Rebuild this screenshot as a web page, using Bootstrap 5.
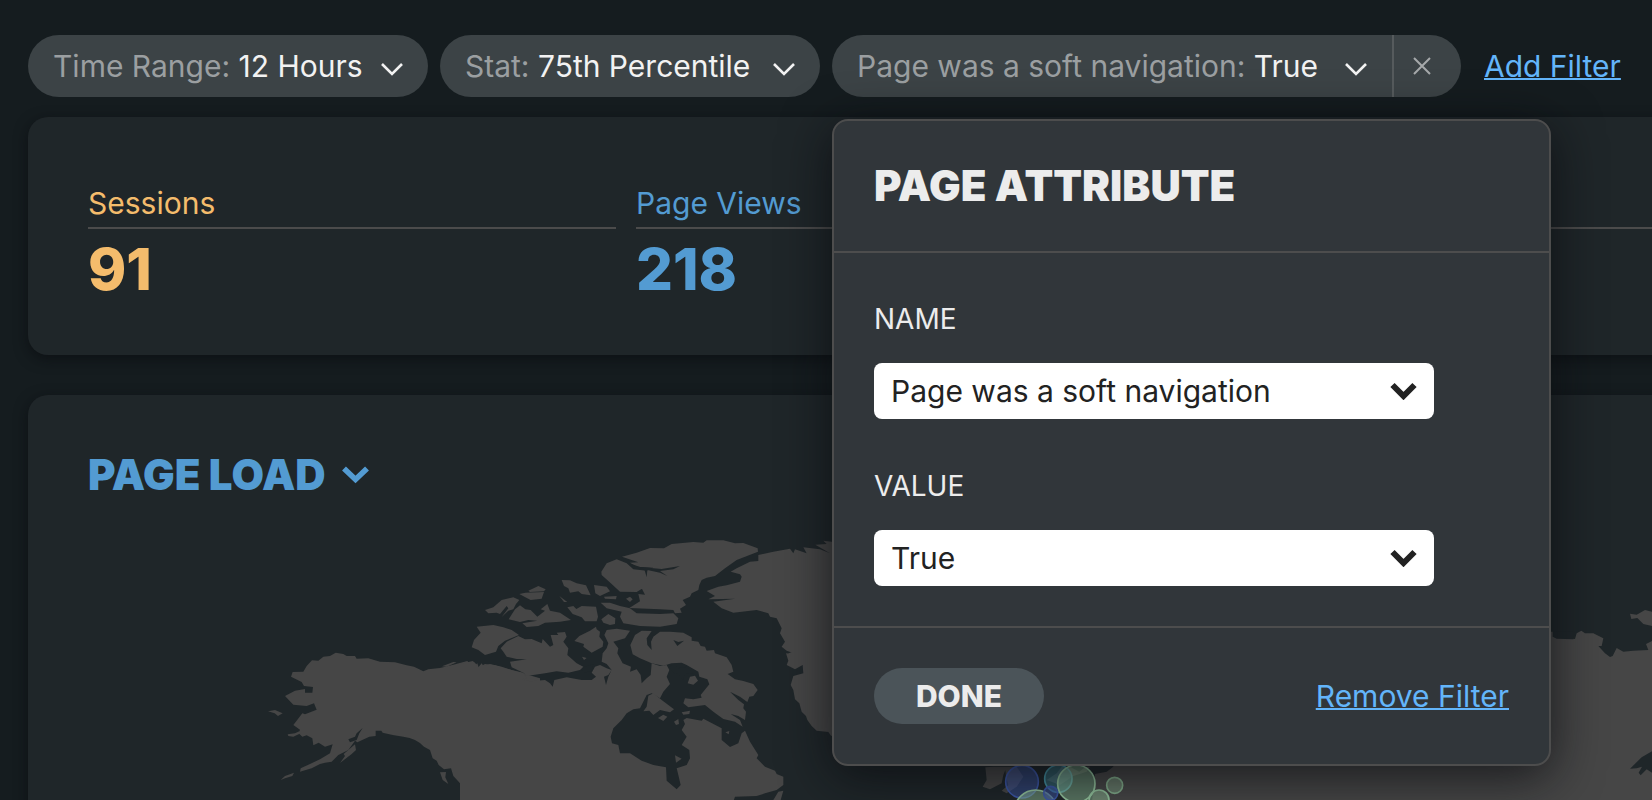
<!DOCTYPE html>
<html lang="en">
<head>
<meta charset="utf-8">
<meta name="viewport" content="width=device-width, initial-scale=1">
<title>Page Load Dashboard</title>
<link href="https://cdn.jsdelivr.net/npm/bootstrap@5.3.0/dist/css/bootstrap.min.css" rel="stylesheet">
<style>
  body { background: #151c1f; color: #ececec; font-family: Inter, "Liberation Sans", sans-serif; font-size: 30px; line-height: 36px; height: 100vh; overflow: hidden; }
  .page { padding: 35px 0 0 28px; }
  .filters { gap: 12px; margin-bottom: 20px; }
  .pill { height: 62px; background: #3c4346; border-radius: 31px; }
  .pill-btn { display: flex; flex-grow: 1; align-items: center; height: 62px; padding: 0 25px; border: 0; background: none; color: #f2f2f2; white-space: pre; }
  .pill-btn .key { color: #9b9fa1; }
  .pill-btn svg { margin: 6px 0 0 auto; }
  .pill-range { min-width: 400px; }
  .pill-stat { min-width: 380px; }
  .pill-attr { min-width: 629px; }
  .pill-x { height: 62px; width: 69px; padding: 0 12px 0 0; border: 0; border-left: 2px solid #565b5d; background: none; }
  .action { color: #63b5fa; text-decoration-thickness: 2px; white-space: nowrap; }
  .add { margin-left: 11px; }
  .panel { background: #1f2629; border-radius: 20px; margin-right: -120px; box-shadow: 0 4px 14px rgba(8,10,14,.6); }
  .stats { display: grid; grid-template-columns: repeat(3, 1fr); gap: 20px; padding: 68px 60px 50px; margin-bottom: 40px; }
  .stat-label { padding-bottom: 6px; border-bottom: 2px solid #4b4b4b; font-weight: 400; font-size: 30px; line-height: 36px; margin: 0; }
  .stat-num { font-size: 58px; line-height: 70px; font-weight: 800; padding-top: 5px; margin-bottom: 1px; }
  .orange { color: #f4bc6c; }
  .blue { color: #539bd2; }
  .load-title { font-size: 42px; line-height: 48px; font-weight: 900; color: #539bd2; background: none; border: 0; padding: 0; gap: 16px; margin: 56px 0 0 60px; }
  .world { display: block; width: 100%; margin-top: 21px; }
  .popup { position: absolute; top: 84px; left: 0; z-index: 5; width: 719px; background: #31363a; border: 2px solid #4d4d4d; border-radius: 16px; box-shadow: 0 10px 50px rgba(8,10,14,.75); }
  .popup-head { padding: 40px; border-bottom: 2px solid #4d4d4d; }
  .popup-head h2 { font-size: 42px; line-height: 50px; font-weight: 900; margin: 0; }
  .popup-body { padding: 48px 40px 40px; }
  .popup-body label { display: block; font-size: 28px; line-height: 36px; margin-bottom: 26px; }
  .popup-body .form-select { width: 560px; height: 56px; margin-bottom: 49px; padding: 0 60px 0 17px; border: 0; border-radius: 8px; color: #222; font-size: 30px; background-color: #fff; background-position: right 17px center; background-size: 27px 18px;
    background-image: url("data:image/svg+xml,%3Csvg xmlns='http://www.w3.org/2000/svg' viewBox='0 0 27 18'%3E%3Cpath d='M2.5 3l11 11 11-11' fill='none' stroke='%23222' stroke-width='6'/%3E%3C/svg%3E"); }
  .popup-body .form-select:last-child { margin-bottom: 0; }
  .popup-foot { padding: 40px; border-top: 2px solid #4d4d4d; }
  .done { width: 170px; height: 56px; border: 0; border-radius: 28px; background: #4b5459; color: #ececec; font-weight: 800; }
</style>
</head>
<body>
<main class="page">
  <div class="filters d-flex align-items-center">
    <div class="pill pill-range d-flex">
      <button class="pill-btn" type="button"><span class="key">Time Range: </span>12 Hours<svg width="22" height="14" viewBox="0 0 22 14" fill="none" stroke="currentColor" stroke-width="2.6"><path d="M1 2l10 10L21 2"/></svg></button>
    </div>
    <div class="pill pill-stat d-flex">
      <button class="pill-btn" type="button"><span class="key">Stat: </span>75th Percentile<svg width="22" height="14" viewBox="0 0 22 14" fill="none" stroke="currentColor" stroke-width="2.6"><path d="M1 2l10 10L21 2"/></svg></button>
    </div>
    <div class="pill pill-attr d-flex position-relative">
      <button class="pill-btn" type="button"><span class="key">Page was a soft navigation: </span>True<svg width="22" height="14" viewBox="0 0 22 14" fill="none" stroke="currentColor" stroke-width="2.6"><path d="M1 2l10 10L21 2"/></svg></button>
      <button class="pill-x d-flex align-items-center justify-content-center" type="button" aria-label="Clear filter"><svg width="18" height="18" viewBox="0 0 18 18" fill="none" stroke="#a6a9aa" stroke-width="2"><path d="M1 1l16 16M17 1L1 17"/></svg></button>
      <form class="popup">
        <div class="popup-head"><h2>PAGE ATTRIBUTE</h2></div>
        <div class="popup-body">
          <label for="attr-name">NAME</label>
          <select class="form-select" id="attr-name"><option>Page was a soft navigation</option></select>
          <label for="attr-value">VALUE</label>
          <select class="form-select" id="attr-value"><option>True</option><option>False</option></select>
        </div>
        <div class="popup-foot d-flex align-items-center justify-content-between">
          <button class="done" type="button">DONE</button>
          <a class="action" href="#">Remove Filter</a>
        </div>
      </form>
    </div>
    <a class="action add" href="#">Add Filter</a>
  </div>

  <section class="panel stats">
    <div><h2 class="stat-label orange">Sessions</h2><div class="stat-num orange">91</div></div>
    <div><h2 class="stat-label blue">Page Views</h2><div class="stat-num blue">218</div></div>
    <div><h2 class="stat-label">&nbsp;</h2></div>
  </section>

  <section class="panel overflow-hidden">
    <button class="load-title d-flex align-items-center" type="button">PAGE LOAD<svg width="27" height="18" viewBox="0 0 27 18" fill="none" stroke="currentColor" stroke-width="5.6"><path d="M2 2.5l11.500 11L25 2.500"/></svg></button>
    <svg class="world" viewBox="-1296 0 5232 1200" role="img" aria-label="World map of page loads">
      <g fill="#464646">
        <!-- Alaska -->
        <g transform="translate(-660 0)">
          <path d="M700 900L665 830L660 815L680 812L665 795L640 768L633 745L612 748L596 735L590 722L578 715L570 690L552 680Q530 655 490 650Q455 645 428 638L424 632L407 632V648L388 650L352 667L345 662L325 690L295 705L275 725L255 728L240 732L215 745L180 755L182 745L210 732L240 718L270 700L278 673L255 680L236 668L220 676L217 655L200 646L187 650L176 640L180 629L160 615L187 580L195 583L230 569L222 550L200 558L160 554L135 528L165 512L195 507V518H217L219 501L192 498L185 486L153 470L158 456L190 455L200 438L216 421L235 422L250 410L270 408L287 398L310 402L320 408L345 408L350 416L385 415L420 425L465 427L500 436L522 440L550 454L565 448L600 444L640 434L682 423L697 442L712 430L716 442L735 432L765 436L800 446L835 456L900 475V900Z"/>
          <path d="M84 574L105 570L128 580L114 588L104 580ZM143 643L165 640L178 634L182 640L160 650L145 648ZM122 780L135 768L162 758L157 768L135 775ZM300 729L315 708L311 702L345 673L348 690L335 702ZM600 757L618 756L616 772L625 792L608 780ZM606 439L640 426L650 427L620 440Z"/>
          <path d="M368 624L350 640L345 650L325 658L330 667L350 660L358 640Z" fill="#1f2629"/>
        </g>
        <!-- Canadian mainland, Nunavut coast, Quebec and Labrador -->
        <path d="M0 432L38 423L45 428L55 442L65 430L70 438L90 432L125 440L155 450L190 458L200 474L185 478L210 484L255 480L270 490L278 500L283 480L320 472L365 480L395 480L408 470L395 458L405 440L420 435L440 445L455 450L445 465L432 470L438 495L445 470L455 450L440 432L425 425L428 400L440 385L445 370L433 345L440 330L470 326L510 332L495 355L460 365L475 385L472 400L488 430L513 440L510 455L530 448L542 465L545 490L560 475L572 465L575 430L600 438L620 435L628 450L620 470L630 492L610 515L600 535L575 520L560 525L540 565L520 568L500 580L485 600L460 625L452 650L456 670L475 675L480 700L510 700L545 722L580 735L618 742L620 782L650 808L662 795L655 765L650 745L680 735L690 715L688 690L665 675L680 650L665 630L675 612L670 600L680 594L725 602L730 596L785 625L785 660L810 681L835 670L845 640L855 632L870 665L895 705L890 715L915 740L945 752L950 762L970 770L970 795L950 810L915 820L890 828L825 830L815 860L0 900Z"/>
        <!-- Baffin Island -->
        <path d="M575 333L545 332L525 345L511 375L518 403L540 415L575 430L610 437L635 430L665 428L680 435L715 455L718 470L742 478L748 493L722 525L725 533L700 538L675 535L670 550L685 562L735 555L760 575L790 597L825 605L848 620L840 600L812 582L835 588L855 600L858 575L850 565L852 553L835 540L810 515L840 530L862 546L868 530L880 528L893 510L880 492L850 483L825 478L803 462L820 455L815 435L800 412L765 400L762 390L740 392L735 380L722 378L715 365L695 362L695 352L670 338L630 335L600 335L580 350L573 365L575 390L562 375L560 355Z"/>
        <path d="M683 490L690 470L705 467L714 482L700 494ZM565 527L580 520L605 540L642 568L630 577L600 570L580 585L568 572L550 574L560 560ZM594 594L610 584L622 590L610 603ZM642 605L655 597L657 612L648 615ZM665 577L690 572L688 582L670 584ZM645 706L665 716L648 728ZM796 637L808 633L806 643Z"/>
        <!-- Inlets and lakes between the islands -->
        <path d="M640 360L652 378L672 362L655 366ZM628 440L642 432L655 445L680 440L700 460L676 462L668 480L655 462L640 458ZM360 432L375 440L400 432L395 452L375 458L358 446Z" fill="#1f2629"/>
        <!-- Ellesmere and Axel Heiberg -->
        <path d="M486 110L530 98L570 84L612 85L635 72L700 66L730 68L740 61L790 61L825 70L850 69L893 85L894 95L830 120L795 145L765 168L740 173L725 180L718 195L715 210L695 220L690 230L668 240L678 255L660 266L665 278L645 280L640 270L600 268L508 264L540 244L535 222L555 224L545 205L580 185L530 216L480 215L455 192L425 165L424 155L440 130L470 118L500 130L520 148L560 152L580 143L530 140L510 128L535 127Z"/>
        <path d="M508 130L540 141L605 147L660 138L640 148L600 153L622 168L600 158L562 150L560 172L553 148L535 145Z" fill="#1f2629"/>
        <!-- Arctic islands -->
        <path d="M75 270L100 262L125 240L160 232L178 240L168 252L160 268L145 272L125 291L145 265L140 258L120 282L110 278L85 280ZM146 298L165 268L180 256L196 268L212 270L232 290L255 272L242 268L262 252L270 272L300 278L333 300L300 305L255 308L235 318L200 321L187 310L232 302L205 300L180 306ZM205 212L235 198L257 208L252 214L210 216ZM178 222L196 218L252 216L245 236L212 240L196 232ZM305 180L330 181L350 190L378 196L392 226L365 222L355 214L330 218L325 205L312 198ZM298 228L322 246L312 246ZM322 262L340 258L352 270L340 272L365 258L408 260L414 290L410 304L375 304L365 292L338 282ZM402 195L440 200L450 214L420 228L406 220ZM432 230L470 228L468 238L435 236ZM498 236L510 230L518 238L510 246ZM422 248L450 248L480 258L510 265L530 280L600 282L640 280L655 295L650 312L600 320L540 318L490 310L480 290L485 275L440 265ZM424 298L445 282L466 295L465 312L450 315L430 308Z"/>
        <path d="M50 320L100 315L130 322L155 330L177 345L135 362L115 378L108 395L75 405L55 390L35 382L42 360L62 338ZM122 385L140 365L175 348L195 358L215 357L245 370L248 357L270 380L280 375L272 345L295 345L290 338L315 336L320 350L310 365L325 385L322 405L350 430L370 440L360 450L325 458L290 454L255 460L200 468L190 458L155 442L150 425L200 418L170 417L140 410L130 395ZM343 363L358 348L390 332L408 320L410 328L420 335L418 350L430 365L428 380L395 398L370 380L372 372ZM360 355L372 348L375 358ZM366 410L380 414L372 420Z"/>
        <!-- Greenland -->
        <path d="M740 213L775 200L800 196L840 185L845 170L840 163L812 155L830 145L870 125L895 123L895 105L940 95L990 86L1000 100L1005 88L1040 100L1030 82L1080 88L1110 100L1066 74L1100 72L1090 62L1140 68V650L1113 647L1105 636L1070 632L1055 618L1042 600L1038 588L1025 575L1018 550L1005 538L1000 510L992 495L1000 468L1030 460L1028 435L1005 448L980 435L985 422L978 400L1010 403L980 392L965 380L975 365L960 340L965 325L950 295L930 290L925 280L890 270L820 278L785 265L760 245L825 236L745 238L765 228ZM985 400L1010 392L1033 418L1010 415Z"/>
        <path d="M940 840L955 815L970 812L962 840Z"/>
        <!-- British Isles and Scandinavia -->
        <path d="M1576 742L1600 740H1640L1630 765L1625 790L1590 808L1568 800L1580 780ZM1635 740H1670L1690 770L1670 800L1640 820L1625 812L1645 795L1638 770ZM1760 780L1790 760L1805 740H1890L1880 755L1840 768L1800 795Z"/>
        <!-- Eurasia -->
        <path d="M1890 900L1905 762L1940 755L1960 740V400L3200 335H3278L3285 348L3345 357L3350 340L3364 332L3375 340L3400 340L3430 355L3425 378L3415 378L3435 400L3450 411L3458 408L3470 384L3490 395L3520 392L3565 390L3558 372L3576 363H3940V1200H1860Z"/>
        <path d="M3510 281L3530 284L3555 270L3576 275V318L3550 312L3532 294L3514 297Z"/>
      </g>
      <path fill="#1f2629" d="M3278 335V350L3290 356L3340 358L3345 335ZM3510 746L3545 712L3576 694H3640V770L3576 758L3560 748L3542 766L3536 758L3546 740L3530 745ZM1830 740L1875 742L1858 755Z"/>
      <g stroke-width="5">
        <circle cx="1686" cy="785" r="49" fill="#3d55a4" fill-opacity=".55" stroke="#3c57a6"/>
        <circle cx="1795" cy="776" r="41" fill="#3f8a9b" fill-opacity=".5" stroke="#4492a4"/>
        <circle cx="1727" cy="874" r="64" fill="#93c49b" fill-opacity=".5" stroke="#92c29c"/>
        <circle cx="1849" cy="791" r="56" fill="#93c49b" fill-opacity=".5" stroke="#92c29c"/>
        <circle cx="1964" cy="796" r="24" fill="#93c49b" fill-opacity=".4" stroke="#82ad8b"/>
        <circle cx="1917" cy="840" r="30" fill="#93c49b" fill-opacity=".5" stroke="#92c29c"/>
        <circle cx="1772" cy="820" r="21" fill="#3d55a4" fill-opacity=".6" stroke="#3c57a6"/>
      </g>
    </svg>
  </section>
</main>
<script src="https://cdn.jsdelivr.net/npm/bootstrap@5.3.0/dist/js/bootstrap.bundle.min.js"></script>
</body>
</html>
